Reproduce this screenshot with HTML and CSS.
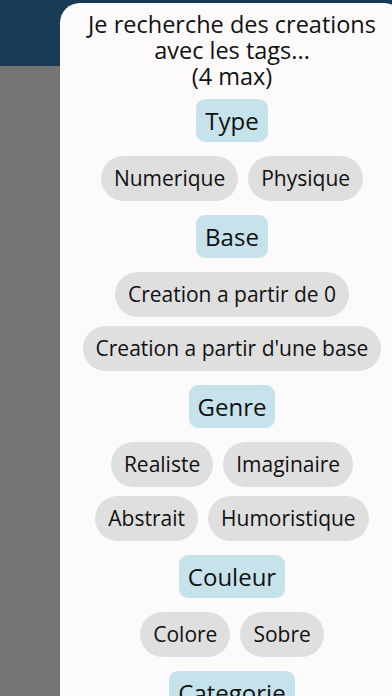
FILE: index.html
```html
<!DOCTYPE html>
<html lang="fr">
<head>
<meta charset="utf-8">
<title>Tags</title>
<link rel="stylesheet" href="styles.css">
</head>
<body>
<div class="band"></div>
<div class="sheet">
  <h1 class="title">Je recherche des creations<br>avec les tags...<br>(4 max)</h1>
  <div class="group">
    <div class="head">Type</div>
    <div class="chips">
      <span class="chip">Numerique</span>
      <span class="chip">Physique</span>
    </div>
  </div>
  <div class="group">
    <div class="head">Base</div>
    <div class="chips">
      <span class="chip">Creation a partir de 0</span>
      <span class="chip">Creation a partir d'une base</span>
    </div>
  </div>
  <div class="group">
    <div class="head">Genre</div>
    <div class="chips">
      <span class="chip">Realiste</span>
      <span class="chip">Imaginaire</span>
      <span class="chip">Abstrait</span>
      <span class="chip">Humoristique</span>
    </div>
  </div>
  <div class="group">
    <div class="head">Couleur</div>
    <div class="chips">
      <span class="chip">Colore</span>
      <span class="chip">Sobre</span>
    </div>
  </div>
  <div class="group">
    <div class="head">Categorie</div>
  </div>
</div>
</body>
</html>
```
FILE: styles.css
```css
html, body {
  margin: 0;
  padding: 0;
}
body {
  width: 392px;
  height: 696px;
  overflow: hidden;
  background: #747474;
  position: relative;
  font-family: "Open Sans", "DejaVu Sans", sans-serif;
  color: #111;
}
.band {
  height: 66px;
  background: #173b55;
}
.sheet {
  position: absolute;
  left: 60px;
  top: 3px;
  width: 344px;
  bottom: 0;
  background: #fdfafb;
  border-top-left-radius: 20px;
  border-top-right-radius: 20px;
  padding-top: 8px;
  display: flex;
  flex-direction: column;
  align-items: center;
  gap: 14px;
  box-sizing: border-box;
  overflow: hidden;
}
.title {
  margin: 0 0 -4px 0;
  font-size: 23.5px;
  font-weight: 500;
  line-height: 26px;
  text-align: center;
}
.group {
  display: flex;
  flex-direction: column;
  align-items: center;
  gap: 14px;
}
.head {
  height: 43px;
  padding: 0 9px;
  border-radius: 9px;
  background: #c6e3eb;
  font-size: 24px;
  font-weight: 500;
  line-height: 43px;
}
.chips {
  display: flex;
  flex-wrap: wrap;
  justify-content: center;
  row-gap: 9px;
  column-gap: 10px;
  width: 324px;
}
.chip {
  height: 45px;
  padding: 0 13px;
  border-radius: 23px;
  background: #dfdfe0;
  font-size: 21px;
  font-weight: 500;
  line-height: 45px;
  white-space: nowrap;
}
```
